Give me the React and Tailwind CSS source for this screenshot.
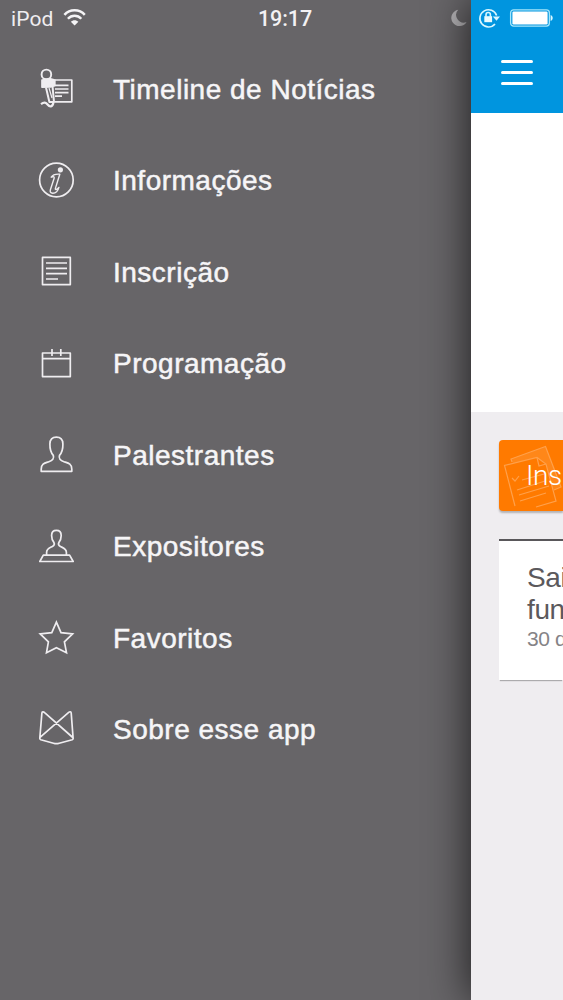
import React from "react";

function Icon({ children }) {
  return (
    <svg
      viewBox="0 0 46 44"
      className="h-11 w-[46px] shrink-0"
      fill="none"
      stroke="#efedf0"
      strokeWidth="1.7"
      strokeLinejoin="round"
    >
      {children}
    </svg>
  );
}

const items = [
  {
    label: "Timeline de Notícias",
    icon: (
      <>
        <path d="M21 13H37.8V34.8H20.5M21 18.4H34.5M21 22H34.5M21 25.6H34.5M21 29.2H28" />
        <circle cx="12.4" cy="7.4" r="4.8" strokeWidth="1.9" />
        <path d="M8 13L16.5 11.8L20.8 13L20.8 18.6L16.5 20L8 20.2Z" fill="#efedf0" />
        <path d="M12 20.5L15.4 35H20L18.6 20" strokeWidth="2" />
        <path d="M15 21L18 31" strokeWidth="1.2" />
        <path d="M7 37.2C10 34.8 12 35.3 13.6 37.5C15.6 40.2 18.6 40.5 19.4 35.5" strokeWidth="2.2" />
      </>
    ),
  },
  {
    label: "Informações",
    icon: (
      <>
        <circle cx="22.4" cy="21" r="16.8" />
        <circle cx="26.4" cy="10.8" r="2.6" fill="#efedf0" stroke="none" />
        <path
          d="M17.2 18.2C18.8 15.5 21.5 14.9 25.8 15.2L21.4 29.4C21 31.2 22.8 30.9 24.9 28.4C24 31.9 21.5 34.2 18.8 34.2C16.4 34.2 15.8 32.7 16.4 30.7L20.2 19C20.5 17.6 18.8 17.3 17.2 18.2Z"
          strokeWidth="1.4"
        />
      </>
    ),
  },
  {
    label: "Inscrição",
    icon: <path d="M8.5 7.4H36.3V34.6H8.5ZM12 13H33M12 18.3H33M12 23.7H33M12 29H24" />,
  },
  {
    label: "Programação",
    icon: <path d="M8.5 11H36.3V34.6H8.5ZM8.5 16.6H36.3M18 7V14M26.8 7V14" />,
  },
  {
    label: "Palestrantes",
    icon: (
      <path d="M7.2 38.3V36.2C7.2 30.5 11 30 14.8 28.7C18.5 27.4 20.4 25.5 19.3 22.4C17 19.8 15.8 15.5 15.9 11C16 6.4 18.5 4.2 22.4 4.2C26.3 4.2 28.8 6.4 28.9 11C29 15.5 27.8 19.8 25.5 22.4C24.4 25.5 26.3 27.4 30 28.7C33.8 30 37.8 30.5 37.8 36.2V38.3Z" />
    ),
  },
  {
    label: "Expositores",
    icon: (
      <>
        <path d="M12.6 30V27.5C12.6 23.5 15.8 22.8 18.4 21.5C20.3 20.5 20.8 19.3 20 17.6C18.4 15.7 17.6 13.3 17.6 10.4C17.6 7 19.4 5.3 22.4 5.3C25.4 5.3 27.2 7 27.2 10.4C27.2 13.3 26.4 15.7 24.8 17.6C24 19.3 24.5 20.5 26.4 21.5C29 22.8 32.4 23.5 32.4 27.5V30" />
        <path d="M9.3 30.2H35.6L39.2 36.5H5.8Z" />
      </>
    ),
  },
  {
    label: "Favoritos",
    icon: (
      <path
        d="M22.4 6.2L27 16.7L38.6 17.8L30.4 25.8L32.5 36.7L22.4 31.8L12.5 36.7L14.4 25.8L6.2 17.8L17.8 16.7Z"
        strokeLinejoin="miter"
      />
    ),
  },
  {
    label: "Sobre esse app",
    icon: (
      <path d="M5.8 30L7.9 5C8 3.6 9.4 3.4 10.6 4.6L38.8 29.5C39.5 30.4 39.2 31.3 38.2 31.7L25.2 35.2C23.2 35.9 21.5 35.9 19.5 35.2L6.8 31.7C5.8 31.3 5.5 30.5 6 29.4L34.7 4.4C35.8 3.4 37 3.5 37.2 5L39.1 30" />
    ),
  },
];

function Drawer() {
  return (
    <aside className="flex h-full w-[471px] shrink-0 flex-col bg-[#676568]">
      <div className="flex h-[43px] shrink-0 items-start pl-[11px] text-[#efedf0]">
        <span className="w-[51px] pt-[7px] font-[Roboto,sans-serif] text-[21px] leading-6 tracking-[0.1px]">
          iPod
        </span>
        <svg viewBox="0 0 24 18" className="mt-[9px] h-[18px] w-6" fill="none" stroke="#f5f4f6">
          <path d="M2.4 5.9C7.8 -0.2 17.4 -0.2 22.8 5.9" strokeWidth="2.5" />
          <path d="M5.9 9.7C9.6 5.7 15.6 5.7 19.3 9.7" strokeWidth="2.4" />
          <path d="M12.6 16.5L8.8 12.7C10.9 10.6 14.3 10.6 16.4 12.7Z" fill="#f5f4f6" stroke="none" />
        </svg>
        <time className="ml-[172px] w-[193px] pt-[7px] font-[Roboto,sans-serif] text-[21.5px] font-medium leading-6 tracking-[-0.1px] text-[#f3f2f4]">
          19:17
        </time>
        <svg viewBox="0 0 18 18" className="mt-[9px] h-[18px] w-[18px] shrink-0">
          <path d="M7.2 0.8A8.2 8.2 0 1 0 15.6 13A7.6 7.6 0 0 1 7.2 0.8Z" fill="#b4b2b5" />
        </svg>
      </div>
      <nav className="flex flex-col pt-[0.5px]">
        {items.map((item) => (
          <a key={item.label} className="flex h-[91.5px] items-center pl-[34px]">
            <Icon>{item.icon}</Icon>
            <span className="ml-[33px] whitespace-nowrap pt-px text-[28px] leading-8 tracking-[0.5px] text-[#f6f5f7] [-webkit-text-stroke:0.5px_#f6f5f7]">
              {item.label}
            </span>
          </a>
        ))}
      </nav>
    </aside>
  );
}

function Content() {
  return (
    <main className="relative z-10 flex h-full w-[92px] shrink-0 flex-col bg-[#efedf0] shadow-[0_0_44px_rgba(0,0,0,0.75)]">
      <header className="flex h-[113px] shrink-0 flex-col bg-[#0095df]">
        <div className="flex h-[60px] items-start pl-[7px] pt-[7px]">
          <svg viewBox="0 0 22 22" className="h-[22px] w-[22px]" fill="none" stroke="#d9f7ff" strokeWidth="1.6">
            <path d="M18.6 8.6A8.6 8.6 0 1 0 17 17" />
            <path d="M14.8 9.6H22L18.5 13.7Z" fill="#d9f7ff" stroke="none" />
            <rect x="6.3" y="9.2" width="7.8" height="6" fill="#e9fbff" stroke="none" />
            <path d="M8 10V7.8C8 4.8 12.4 4.8 12.4 7.8V10" />
          </svg>
          <svg viewBox="0 0 44 20" className="ml-[9px] mt-[2px] h-5 w-11">
            <rect x="1.6" y="0.9" width="38.8" height="16.2" rx="3" fill="none" stroke="#a5e6fb" strokeWidth="1.3" />
            <rect x="3.4" y="2.6" width="35.2" height="12.8" rx="1.2" fill="#fff" />
            <path d="M41.6 6C44.4 6.8 44.4 11.2 41.6 12Z" fill="#d9f7ff" />
          </svg>
        </div>
        <button className="ml-[30px] flex w-8 flex-col gap-[8px]" aria-label="Menu">
          <span className="h-[3px] w-8 rounded-full bg-white" />
          <span className="h-[3px] w-8 rounded-full bg-white" />
          <span className="h-[3px] w-8 rounded-full bg-white" />
        </button>
      </header>
      <div className="h-[299px] shrink-0 bg-white" />
      <div className="flex flex-col overflow-hidden pb-2 pl-[28px] pt-7">
        <div className="grid h-[71px] overflow-hidden rounded-l-[4px] bg-[#ff7a00] shadow-[0_2px_2px_rgba(0,0,0,0.25)]">
          <svg
            viewBox="0 0 64 71"
            className="col-start-1 row-start-1 h-[71px] w-16"
            fill="none"
            stroke="#ffa04a"
            strokeWidth="1.2"
          >
            <path d="M13 22L12 19L46.5 6.5L62 47L55 50" fill="#ff8719" />
            <path d="M16 66L5.5 25.5L38 17.5L47 24L57 61L37 67" fill="#ff7a00" stroke="none" />
            <path d="M16 66L5.5 25.5L38 17.5L47 24L57 61L37 67" />
            <path d="M38 17.5L40 26L47 24M13 38L16 41L20 36M23 40L45 34M18 50L46 41M20 55L50 46M21 61L47 53" />
          </svg>
          <span className="col-start-1 row-start-1 self-center pl-[27px] pt-px font-[Roboto,sans-serif] text-[28px] font-light leading-8 tracking-[-0.4px] text-white">
            Ins
          </span>
        </div>
        <article className="mt-7 h-[141px] shrink-0 whitespace-nowrap border-t-2 border-[#59575a] bg-white pl-[28px] pt-[21px] text-[#5b595c] shadow-[0_2px_1px_-1px_rgba(0,0,0,0.28)]">
          <h2 className="text-[28px] leading-8 tracking-[-0.4px]">
            Sai
            <br />
            fun
          </h2>
          <p className="text-[21px] leading-[26px] tracking-[-0.4px] text-[#858386]">30 d</p>
        </article>
      </div>
    </main>
  );
}

export default function App() {
  return (
    <div className="flex h-[1000px] w-[563px] overflow-hidden bg-[#676568] font-['Liberation_Sans',Arial,sans-serif]">
      <Drawer />
      <Content />
    </div>
  );
}
